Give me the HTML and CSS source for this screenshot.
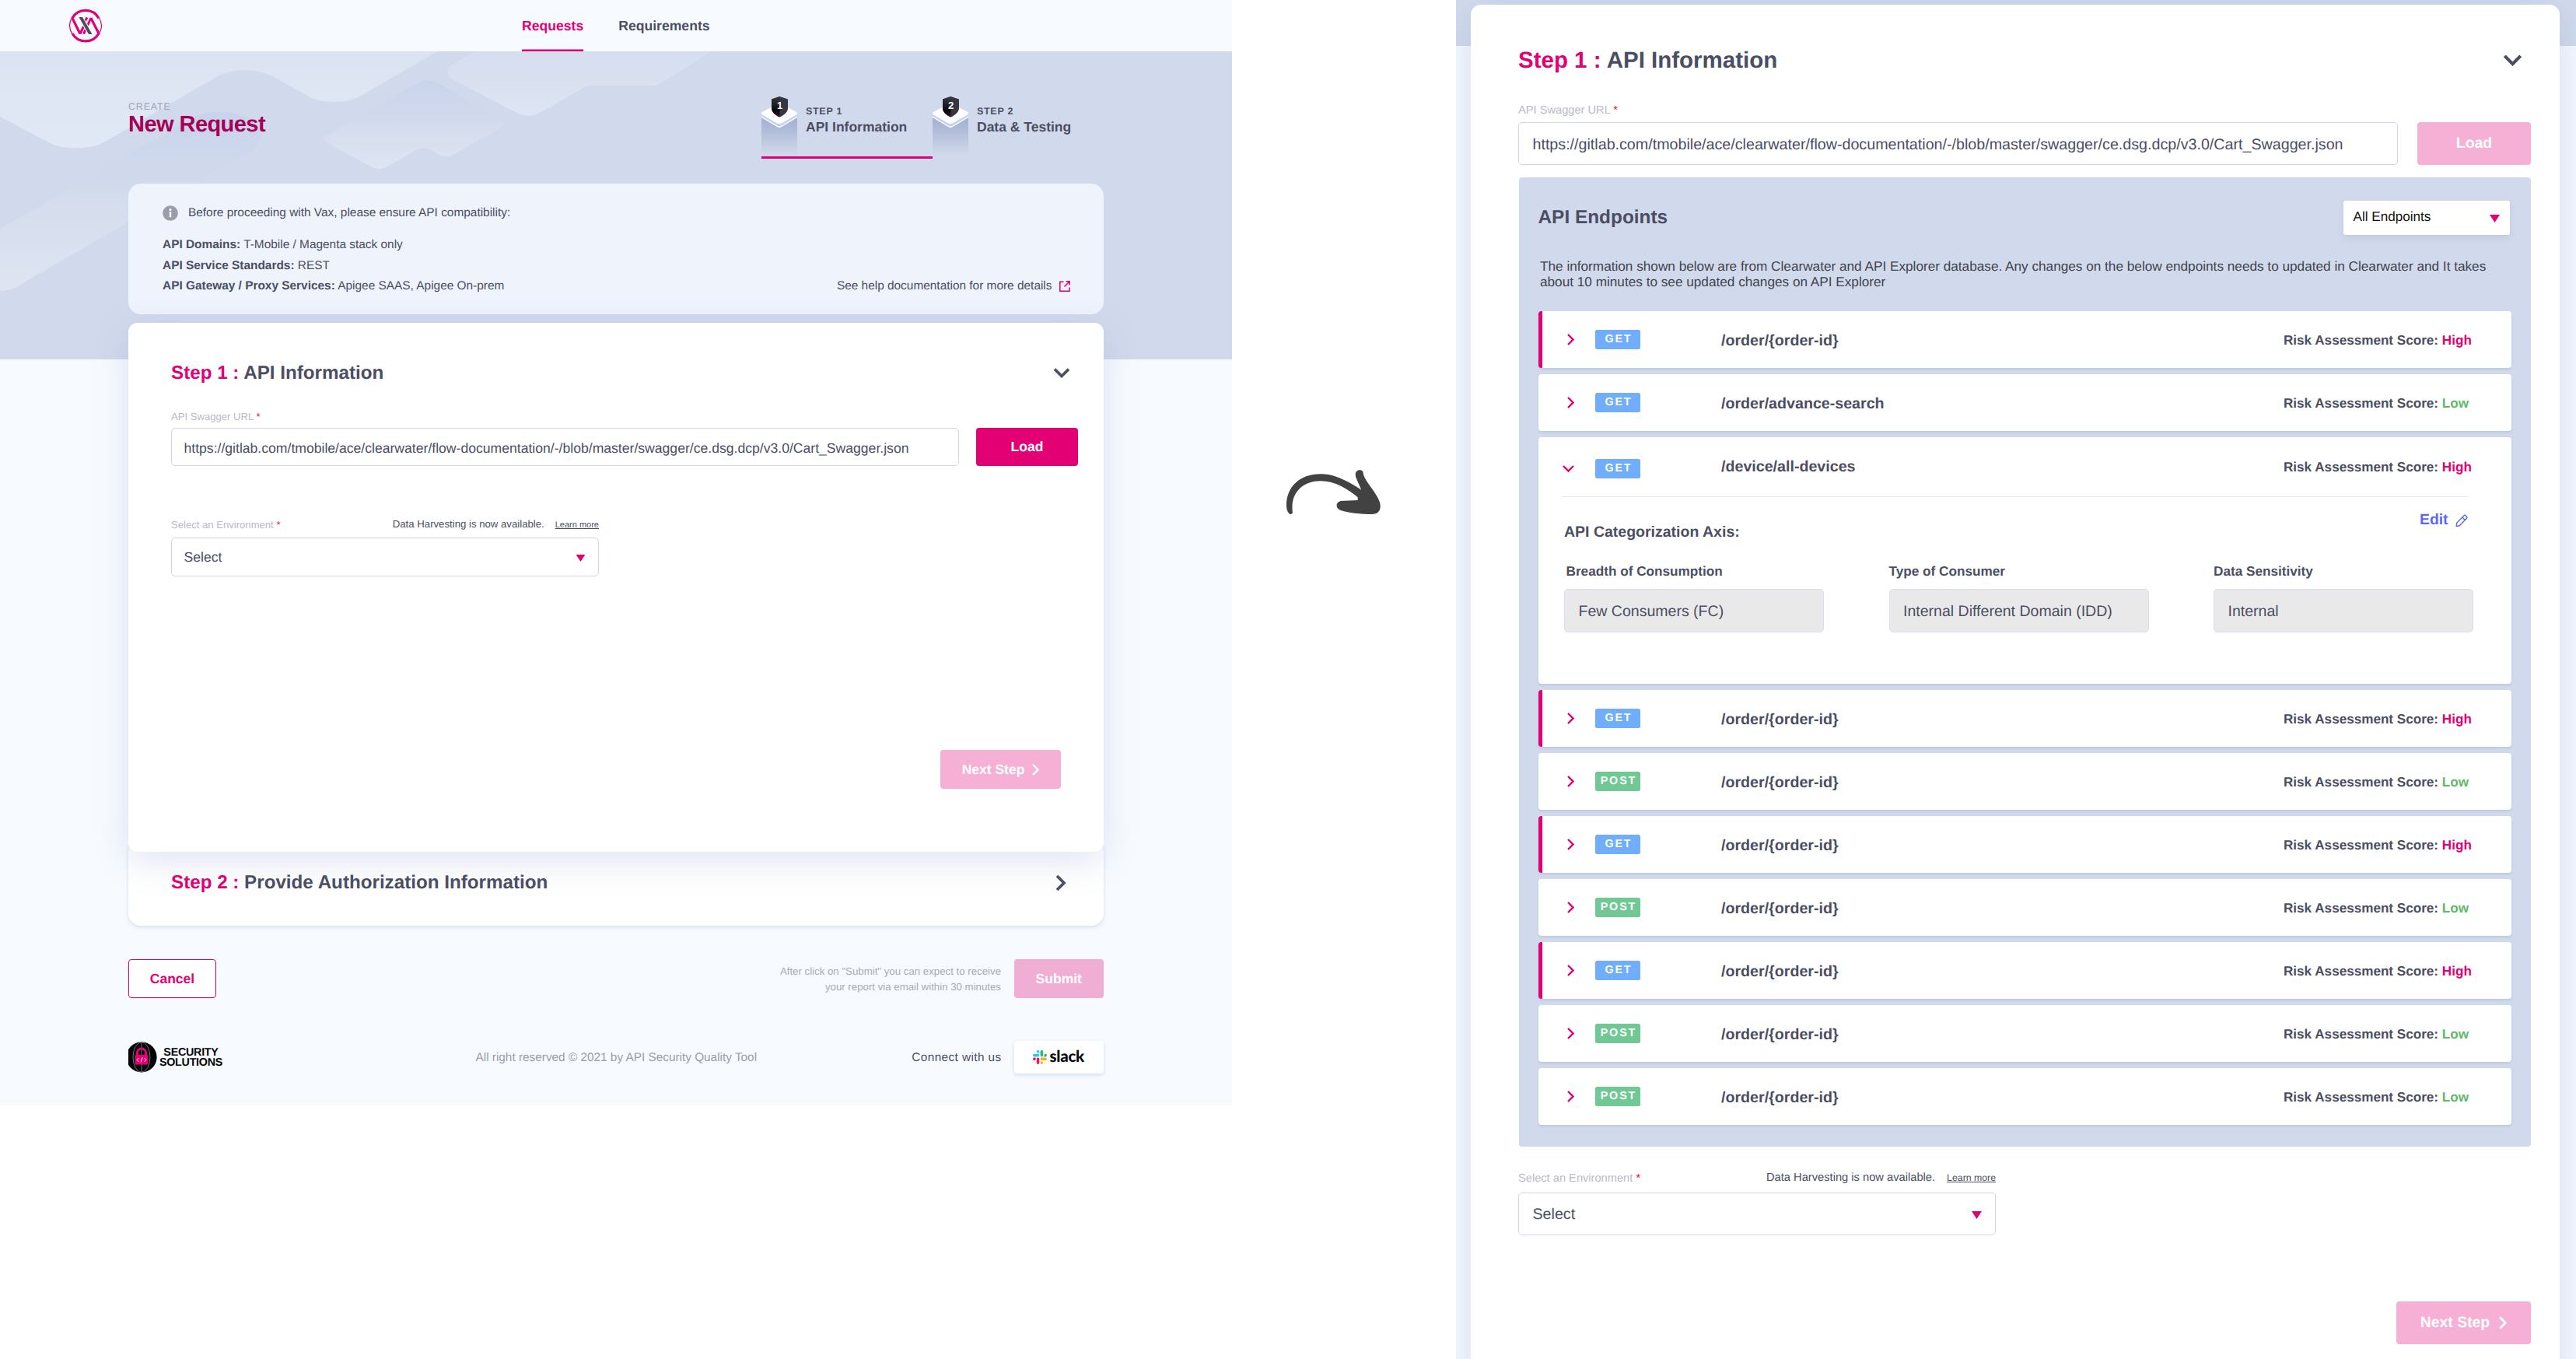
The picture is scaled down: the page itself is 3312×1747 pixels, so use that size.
FILE: index.html
```html
<!DOCTYPE html>
<html lang="en">
<head>
<meta charset="utf-8">
<title>New Request</title>
<link rel="stylesheet" href="styles.css">
</head>
<body>
<svg class="defs" width="0" height="0" aria-hidden="true">
  <symbol id="chev-down" viewBox="0 0 22 14"><path d="M2 2.5 11 11.5 20 2.5" fill="none" stroke="currentColor" stroke-width="3.7"/></symbol>
  <symbol id="chev-right" viewBox="0 0 9 15"><path d="M1 1 7.500 7.500 1 14" fill="none" stroke="currentColor" stroke-width="2.400"/></symbol>
  <symbol id="caret" viewBox="0 0 13 10"><path d="M0 0H13L6.5 10Z" fill="currentColor"/></symbol>
  <symbol id="tile" viewBox="0 0 46 78">
    <path d="M0 27H46V78H0Z" fill="url(#beam)"/>
    <path d="M0 26 0 29 20 41Q23 43 26 41L46 29V26Z" fill="#fff"/>
    <path d="M0 25.500V27.500L20 39.500Q23 41 26 39.500L46 27.500V25.500Z" fill="#c3d1f6"/>
    <path d="M1 22 20 12Q23 10.500 26 12L45 22Q47 24 45 25.500L26 36.500Q23 38 20 36.500L1 25.500Q-1 24 1 22Z" fill="#fff"/>
    <path d="M23.500 2 34 5.500V17C34 22 28.500 26.500 23.500 28.500 18 26.500 13 22 13 17V5.500Z" fill="#363640"/>
    <path d="M23.500 2V28.500C18 26.500 13 22 13 17V5.500Z" fill="url(#shade)"/>
  </symbol>
  <linearGradient id="beam" x1="0" y1="0" x2="0" y2="1"><stop offset="0" stop-color="#a4b1d0"/><stop offset=".3" stop-color="#adb9d6"/><stop offset="1" stop-color="#d1daec"/></linearGradient>
  <linearGradient id="shade" x1="0" y1="0" x2="0" y2="1"><stop offset="0" stop-color="#3a3a44"/><stop offset=".7" stop-color="#08080c"/><stop offset="1" stop-color="#3a1530"/></linearGradient>
</svg>

<div class="page page-left">
  <header class="header">
    <svg class="logo" width="44" height="44" viewBox="0 0 44 44">
      <path d="M3.500 13.500A20.300 20.300 0 0 0 5 33" fill="none" stroke="#e20074" stroke-width="1.200"/>
      <path d="M40.500 30.500A20.300 20.300 0 0 0 39 11" fill="none" stroke="#e20074" stroke-width="1.200"/>
      <path d="M15 32.500 5 12.200A19.500 19.500 0 0 1 39 12.500" fill="none" stroke="#e20074" stroke-width="3.200"/>
      <path d="M28.800 12 39 32A19.500 19.500 0 0 1 5 32" fill="none" stroke="#e20074" stroke-width="3.200"/>
      <path d="M15 32.500 19.500 23M19.500 32.500 23 25.500M24 23 29 12M20.500 17.500 24 11.500" fill="none" stroke="#e20074" stroke-width="3"/>
      <path d="M15.800 11 28.300 33" stroke="#f7fbff" stroke-width="6"/>
      <path d="M13.500 11H18L30.500 33H26Z" fill="#4b4e63"/>
    </svg>
    <nav class="nav"><a class="nav-link active">Requests</a><a class="nav-link">Requirements</a></nav>
  </header>
  <main class="content">
    <svg class="hero" viewBox="0 0 3104.600 1188" preserveAspectRatio="none">
      <defs>
        <linearGradient id="ga" x1="0" y1="0" x2="0" y2="1"><stop offset="0" stop-color="#dbe2f1"/><stop offset="1" stop-color="#e2e9f6"/></linearGradient>
        <linearGradient id="gb" x1="0" y1="0" x2="0" y2="1"><stop offset="0" stop-color="#c8d3ec"/><stop offset=".38" stop-color="#d1daec"/><stop offset="1" stop-color="#dfe5f2"/></linearGradient>
        <linearGradient id="gc" x1="0" y1="0" x2="0" y2="1"><stop offset="0" stop-color="#c8d4ed"/><stop offset=".4" stop-color="#d1d9ec"/><stop offset="1" stop-color="#dee5f3"/></linearGradient>
        <linearGradient id="gd" x1="0" y1="0" x2="0" y2="1"><stop offset="0" stop-color="#d5ddef"/><stop offset="1" stop-color="#dee5f3"/></linearGradient>
      </defs>
      <g transform="translate(0 -198)">
        <path fill="url(#ga)" d="M0 198H1103L920 360C880 404 800 404 765 360L690 297C650 262 585 262 545 297L262 548C230 578 155 578 122 548L0 450Z"/>
        <path fill="url(#gb)" d="M0 882 480 460C510 420 600 420 640 470 665 500 665 545 635 580L60 1090C40 1115 15 1122 0 1122Z"/>
        <path fill="url(#gc)" d="M1055 318C1068 306 1085 306 1100 318L1260 460C1272 472 1270 485 1260 496L1145 595C1135 606 1115 606 1105 595L1085 578C1072 569 1060 569 1050 578L975 643C962 654 948 654 935 643L825 552C814 542 814 530 825 520Z"/>
        <path fill="url(#gd)" d="M1197 198 1140 250C1122 265 1122 290 1140 305L1305 437C1320 450 1345 448 1358 437L1470 338C1478 331 1485 330 1495 330H1655L1792 198Z"/>
      </g>
    </svg>

    <div class="title-row">
      <div class="title-block">
        <div class="eyebrow">CREATE</div>
        <h1 class="title">New Request</h1>
      </div>
      <div class="steps">
        <div class="step current">
          <div class="tile"><svg width="46" height="78"><use href="#tile"/></svg><span class="tile-no">1</span></div>
          <div class="step-text"><div class="step-label">STEP 1</div><div class="step-name">API Information</div></div>
        </div>
        <div class="step">
          <div class="tile"><svg width="46" height="78"><use href="#tile"/></svg><span class="tile-no">2</span></div>
          <div class="step-text"><div class="step-label">STEP 2</div><div class="step-name">Data &amp; Testing</div></div>
        </div>
      </div>
    </div>

    <section class="info">
      <div class="info-head">
        <svg width="20" height="20" viewBox="0 0 20 20"><circle cx="10" cy="10" r="9.800" fill="#9b9dac"/><circle cx="10" cy="5.400" r="1.500" fill="#fff"/><path d="M8.800 8.200H11.200V15.200H8.800Z" fill="#fff"/></svg>
        <span>Before proceeding with Vax, please ensure API compatibility:</span>
      </div>
      <div class="info-line"><span><b>API Domains:</b> T-Mobile / Magenta stack only</span></div>
      <div class="info-line"><span><b>API Service Standards:</b> REST</span></div>
      <div class="info-line"><span><b>API Gateway / Proxy Services:</b> Apigee SAAS, Apigee On-prem</span>
        <span class="help">See help documentation for more details
          <svg width="14" height="14" viewBox="0 0 14 14" fill="none" stroke="#e20074" stroke-width="1.500"><path d="M5.500 1.300H.8V13.200H13.100V8.500M8.500 .8H13.200V5.500M13 1 6.500 7.500"/></svg>
        </span>
      </div>
    </section>

    <section class="card step-one">
      <div class="card-head"><h2 class="card-title"><span class="pink">Step 1 :</span> API Information</h2><svg width="22" height="14"><use href="#chev-down"/></svg></div>
      <div class="label url-label">API Swagger URL <i>*</i></div>
      <div class="url-row"><div class="field">https://gitlab.com/tmobile/ace/clearwater/flow-documentation/-/blob/master/swagger/ce.dsg.dcp/v3.0/Cart_Swagger.json</div><div class="btn load">Load</div></div>
      <div class="env">
        <div class="env-head"><span class="label">Select an Environment <i>*</i></span><span class="harvest">Data Harvesting is now available.<a class="learn">Learn more</a></span></div>
        <div class="field select"><span>Select</span><svg width="13" height="9"><use href="#caret"/></svg></div>
      </div>
      <div class="btn next soft">Next Step<svg width="9" height="15"><use href="#chev-right"/></svg></div>
    </section>
    <section class="card step-two">
      <h2 class="card-title"><span class="pink">Step 2 :</span> Provide Authorization Information</h2><svg width="14" height="22" viewBox="0 0 14 22"><path d="M2 2 11 11 2 20" fill="none" stroke="#4b4e63" stroke-width="3.700"/></svg>
    </section>

    <div class="actions">
      <div class="btn cancel">Cancel</div>
      <p class="hint">After click on "Submit" you can expect to receive<br>your report via email within 30 minutes</p>
      <div class="btn submit">Submit</div>
    </div>
    <footer class="footer">
      <div class="security">
        <svg width="38" height="40" viewBox="0 0 38 40">
          <circle cx="18" cy="20" r="19.600" fill="#050507"/>
          <g fill="none" stroke="#8b8b90" stroke-width=".8"><ellipse cx="18" cy="20" rx="11" ry="19.300"/><path d="M18 .5V39.500"/></g>
          <path d="M12.500 19V14.500A5.500 5.500 0 0 1 23.500 14.500V19" fill="none" stroke="#e20074" stroke-width="3"/>
          <rect x="9.500" y="17" width="17" height="12.500" rx="1.500" fill="#e20074"/>
          <path d="M14.500 21 12 23.500 14.500 26M21.500 21 24 23.500 21.500 26M19 20.500 17 26.500" fill="none" stroke="#fff" stroke-width="1"/>
        </svg>
        <div class="security-name"><span>SECURITY</span><span>SOLUTIONS</span></div>
      </div>
      <div class="copyright">All right reserved © 2021 by API Security Quality Tool</div>
      <div class="connect">Connect with us</div>
      <div class="slack">
        <svg width="18" height="18" viewBox="0 0 54 54">
          <path fill="#36c5f0" d="M19.700.1a5.400 5.400 0 0 0 0 10.800h5.400V5.500A5.400 5.400 0 0 0 19.700.1m0 14.400H5.400a5.400 5.400 0 0 0 0 10.800h14.300a5.400 5.400 0 0 0 0-10.800"/>
          <path fill="#2eb67d" d="M53.800 19.900a5.400 5.400 0 0 0-10.800 0v5.400h5.400a5.400 5.400 0 0 0 5.400-5.400m-14.300 0V5.500a5.400 5.400 0 0 0-10.800 0v14.400a5.400 5.400 0 0 0 10.800 0"/>
          <path fill="#ecb22e" d="M34.100 54a5.400 5.400 0 0 0 0-10.800h-5.400v5.400a5.400 5.400 0 0 0 5.400 5.400m0-14.400h14.300a5.400 5.400 0 0 0 0-10.800H34.100a5.400 5.400 0 0 0 0 10.800"/>
          <path fill="#e01e5a" d="M0 34.200a5.400 5.400 0 0 0 10.800 0v-5.400H5.400A5.400 5.400 0 0 0 0 34.200m14.300 0v14.400a5.400 5.400 0 0 0 10.800 0V34.200a5.400 5.400 0 0 0-10.800 0"/>
        </svg>
        <span>slack</span>
      </div>
    </footer>
  </main>
</div>

<div class="flow-arrow">
  <svg width="122" height="58" viewBox="103 131 366 174"><path fill="#424242" d="M103 268C103 200 150 147 238 147 290 147 350 180 391 208 388 198 380 182 373 165 365 148 370 132 386 132 400 132 398 142 401 152 410 180 450 218 463 256 470 282 460 302 433 302 390 301 340 297 310 286 292 278 292 256 312 251L378 248V237C340 205 290 174 235 174 170 174 120 215 126 288L127 297C122 303 120 303 115 301 108 294 103 285 103 268Z"/></svg>
</div>

<div class="page page-right">
  <section class="card big">
    <div class="card-head"><h2 class="card-title"><span class="pink">Step 1 :</span> API Information</h2><svg width="25" height="16"><use href="#chev-down"/></svg></div>
    <div class="label url-label">API Swagger URL <i>*</i></div>
    <div class="url-row"><div class="field">https://gitlab.com/tmobile/ace/clearwater/flow-documentation/-/blob/master/swagger/ce.dsg.dcp/v3.0/Cart_Swagger.json</div><div class="btn load soft">Load</div></div>

    <div class="endpoints">
      <div class="ep-head"><h3 class="ep-title">API Endpoints</h3><div class="filter"><span>All Endpoints</span><svg width="13" height="10"><use href="#caret"/></svg></div></div>
      <p class="ep-note">The information shown below are from Clearwater and API Explorer database. Any changes on the below endpoints needs to updated in Clearwater and It takes<br>about 10 minutes to see updated changes on API Explorer</p>
      <div class="rows">
        <div class="row flagged"><div class="row-main"><svg class="chev"><use href="#chev-right"/></svg><span class="badge get">GET</span><span class="path">/order/{order-id}</span><span class="risk">Risk Assessment Score: <em class="high">High</em></span></div></div>
        <div class="row"><div class="row-main"><svg class="chev"><use href="#chev-right"/></svg><span class="badge get">GET</span><span class="path">/order/advance-search</span><span class="risk">Risk Assessment Score: <em class="low">Low</em></span></div></div>
        <div class="row open">
          <div class="row-main"><svg class="chev-open" viewBox="0 0 15 9"><path d="M1 1 7.500 7.500 14 1" fill="none" stroke="#e20074" stroke-width="2.400"/></svg><span class="badge get">GET</span><span class="path">/device/all-devices</span><span class="risk">Risk Assessment Score: <em class="high">High</em></span></div>
          <div class="detail">
            <div class="detail-head"><h4 class="axis">API Categorization Axis:</h4><a class="edit">Edit<svg width="16" height="17" viewBox="0 0 16 17" fill="none" stroke="#5b66f5" stroke-width="1.400" stroke-linejoin="round"><path d="M1.200 15.500 1.700 11.200 11 1.800Q12 .9 13 1.800L14.500 3.300Q15.400 4.300 14.500 5.300L5.200 14.800ZM8.800 4 12.300 7.500"/></svg></a></div>
            <div class="axes">
              <div><div class="axis-label first">Breadth of Consumption</div><div class="axis-value">Few Consumers (FC)</div></div>
              <div><div class="axis-label">Type of Consumer</div><div class="axis-value">Internal Different Domain (IDD)</div></div>
              <div><div class="axis-label">Data Sensitivity</div><div class="axis-value">Internal</div></div>
            </div>
          </div>
        </div>
        <div class="row flagged"><div class="row-main"><svg class="chev"><use href="#chev-right"/></svg><span class="badge get">GET</span><span class="path">/order/{order-id}</span><span class="risk">Risk Assessment Score: <em class="high">High</em></span></div></div>
        <div class="row"><div class="row-main"><svg class="chev"><use href="#chev-right"/></svg><span class="badge post">POST</span><span class="path">/order/{order-id}</span><span class="risk">Risk Assessment Score: <em class="low">Low</em></span></div></div>
        <div class="row flagged"><div class="row-main"><svg class="chev"><use href="#chev-right"/></svg><span class="badge get">GET</span><span class="path">/order/{order-id}</span><span class="risk">Risk Assessment Score: <em class="high">High</em></span></div></div>
        <div class="row"><div class="row-main"><svg class="chev"><use href="#chev-right"/></svg><span class="badge post">POST</span><span class="path">/order/{order-id}</span><span class="risk">Risk Assessment Score: <em class="low">Low</em></span></div></div>
        <div class="row flagged"><div class="row-main"><svg class="chev"><use href="#chev-right"/></svg><span class="badge get">GET</span><span class="path">/order/{order-id}</span><span class="risk">Risk Assessment Score: <em class="high">High</em></span></div></div>
        <div class="row"><div class="row-main"><svg class="chev"><use href="#chev-right"/></svg><span class="badge post">POST</span><span class="path">/order/{order-id}</span><span class="risk">Risk Assessment Score: <em class="low">Low</em></span></div></div>
        <div class="row"><div class="row-main"><svg class="chev"><use href="#chev-right"/></svg><span class="badge post">POST</span><span class="path">/order/{order-id}</span><span class="risk">Risk Assessment Score: <em class="low">Low</em></span></div></div>
      </div>
    </div>

    <div class="env">
      <div class="env-head"><span class="label">Select an Environment <i>*</i></span><span class="harvest">Data Harvesting is now available.<a class="learn">Learn more</a></span></div>
      <div class="field select"><span>Select</span><svg width="15" height="10"><use href="#caret"/></svg></div>
    </div>
    <div class="btn next soft">Next Step<svg width="10" height="17"><use href="#chev-right"/></svg></div>
  </section>
</div>
</body>
</html>
```
FILE: styles.css
```css
*{box-sizing:border-box}
html,body{margin:0;height:1747px;overflow:hidden}
body{display:flex;align-items:flex-start;background:#fff;color:#4b4e63;font-family:"Liberation Sans",Arial,sans-serif;text-rendering:geometricPrecision}
h1,h2,h3,h4,p{margin:0}
svg{display:block;flex:none}
.defs{position:absolute}
.pink{color:#e20074}

/* left page */
.page-left{width:1584px;height:1421px;background:#f7fbff;flex:none;overflow:hidden}
.header{height:66px;display:flex}
.logo{margin:11px 0 0 88px}
.nav{display:flex;gap:45px;margin-left:539px;font-size:17.6px;font-weight:700;line-height:67.5px}
.nav-link{height:66px}
.nav-link.active{color:#e20074;box-shadow:inset 0 -2.5px #e20074}
.content{position:relative;height:1355px;padding:0 165px}
.hero{position:absolute;left:0;top:0;width:1584px;height:396px;background:#d1daec}
.title-row{position:relative;height:170px;display:flex;justify-content:space-between}
.title-block{padding-top:62.5px}
.eyebrow{font-size:12.4px;line-height:16px;letter-spacing:.9px;color:#9fa3b5}
.title{font-size:29px;line-height:31px;letter-spacing:-.55px;color:#a50055}
.steps{display:flex;padding-top:56px}
.step{width:220px;height:82px;display:flex;border-bottom:3px solid transparent}
.step.current{border-color:#e20074}
.tile{position:relative}
.tile-no{position:absolute;left:13px;width:21px;top:6px;text-align:center;color:#fff;font-size:13px;font-weight:700;line-height:16px}
.step-text{padding:13px 0 0 11px;font-weight:700}
.step-label{font-size:12.500px;line-height:16px;letter-spacing:.7px}
.step-name{font-size:17.500px;line-height:24px}

.info{position:relative;height:168px;border-radius:16px;background:#eef3fc;padding:24.8px 43.5px 0 44px;font-size:15.42px;line-height:26.5px}
.info-head{display:flex;align-items:center;gap:13px;margin-bottom:15px}
.info-line{display:flex;justify-content:space-between}
.help{display:flex;align-items:center;gap:9px}
.help svg{margin-top:-2px}

.card{position:relative;background:#fff}
.card-head{display:flex;justify-content:space-between;align-items:center}
.card-title{font-size:24.2px;line-height:30px}
.step-one{z-index:1;height:680px;margin-top:11px;border-radius:12px;padding:49.6px 33px 0 55px;box-shadow:0 12px 46px rgba(100,120,190,.2)}
.step-one .card-head{padding-right:10px}
.step-one .card-head svg,.big .card-head svg{margin-top:-2px}
.label{display:block;font-size:13.1px;line-height:16px;color:#b9bac6}
.label i{font-style:normal;color:#f0122d}
.url-label{margin:33px 0 6.400px}
.url-row{display:flex;gap:22px}
.field{flex:1;height:49.5px;border:1px solid #cdd6ea;border-radius:5px;background:#fff;padding:2px 0 0 15.500px;font-size:17.600px;line-height:47.500px;white-space:nowrap}
.btn{border-radius:4px;height:49.5px;font-size:17.5px;font-weight:700;line-height:49px;text-align:center;color:#fff}
.soft{background:#f6b0d5}
.load{width:131px;background:#e20074}
.load.soft{background:#f6b0d5}
.env{width:550px;margin-top:68px}
.env-head{display:flex;justify-content:space-between;margin-bottom:8px}
.harvest{font-size:13.2px;line-height:16px;margin-top:-1px;display:flex}
.learn{font-size:11px;text-decoration:underline;margin-left:14px;padding-top:.5px}
.select{display:flex;justify-content:space-between;align-items:center;padding-right:16px}
.select svg,.filter svg{color:#e20074}
.next{display:flex;align-items:center;justify-content:center;gap:10px;width:155px;margin:223.500px 22px 0 auto}
.next svg{margin-top:1px}
.step-two{height:110px;margin-top:-15px;border-radius:16px;padding:0 48.500px 0 55px;display:flex;justify-content:space-between;align-items:center;box-shadow:0 2px 5px rgba(100,120,190,.22)}
.step-two .card-title{margin-top:0}
.actions{display:flex;margin-top:43px}
.cancel{width:113px;border:1px solid #e20074;color:#e20074;background:#fff;line-height:48.5px}
.hint{margin-left:auto;padding-top:5.6px;text-align:right;font-size:13.25px;line-height:20px;color:#a7a9b5}
.submit{width:115.5px;margin-left:16.500px;background:#f1aed4;line-height:51px}
.footer{display:flex;align-items:center;height:42px;margin-top:55.500px;font-size:15.35px}
.security{display:flex;align-items:center;width:120.500px;overflow:hidden;color:#050507}
.security svg{margin-left:-1px}
.security-name{display:flex;flex-direction:column;align-items:center;flex:none;width:85px;margin:2px 0 0 1px;font-size:14.3px;font-weight:700;line-height:13px;letter-spacing:-.25px}
.copyright{margin:1px 0 0 326px;color:#9a9cab}
.connect{margin:1px 0 0 auto;letter-spacing:.4px}
.slack{width:115.5px;height:42px;margin-left:16px;border-radius:4px;background:#fff;display:flex;align-items:center;justify-content:center;gap:4px;padding-right:1px;box-shadow:0 2px 5px rgba(100,120,220,.24);font-family:Lato,sans-serif;font-weight:900;font-size:20.5px;letter-spacing:-.3px;color:#0a0a0a}
.slack span{margin-top:-3px}

.flow-arrow{width:288px;flex:none;padding:604px 0 0 70px}

/* right page */
.page-right{width:1440px;height:1747px;flex:none;overflow:hidden;padding:6px 21px 0 18.500px;background:linear-gradient(#d1daec 59px,#f7fbff 59px)}
.big{height:1800px;border-radius:13px;padding:54px 37px 0 61.500px;box-shadow:0 12px 52px rgba(100,120,190,.24)}
.big .card-head{padding-right:11.500px}
.big .card-title{font-size:29.5px;line-height:36px}
.big .label{font-size:14.65px;line-height:18px}
.big .url-label{margin:37.200px 0 5.800px}
.big .url-row{gap:25px}
.big .field{height:55px;line-height:53px;font-size:19.680px;padding-left:17.500px}
.big .btn{height:55px;line-height:55px;font-size:19.4px}
.big .load{width:146px}
.endpoints{height:1246px;margin:16px 0 0 1px;border-radius:4px;background:#d1daec;padding:30px 25px 0 24.500px}
.ep-head{display:flex;justify-content:space-between;height:44px}
.ep-title{font-size:24.4px;line-height:43px}
.filter{width:214px;margin-right:2px;padding:0 13px 0 12.500px;display:flex;align-items:center;justify-content:space-between;border-radius:3px;background:#fff;color:#111;font-size:17.100px;line-height:42px;box-shadow:0 4px 8px rgba(120,140,190,.2)}
.filter span{margin-top:-1px}
.filter svg{margin-top:2px}
.ep-note{margin:31px 0 27.600px 2.500px;font-size:17.210px;line-height:19.7px;color:#41434c;white-space:nowrap}
.rows{display:flex;flex-direction:column;gap:7.500px}
.row{height:73.500px;border-radius:4px;background:#fff;overflow:hidden;box-shadow:0 2px 3px rgba(100,120,180,.18)}
.row.flagged{border-left:5px solid #e20074}
.row-main{height:74px;display:grid;grid-template-columns:73.500px 162px 1fr 293px;align-items:center;font-weight:700}
.flagged .row-main{margin-left:-5px}
.chev{width:9px;height:15px;margin-left:37.500px;color:#e20074}
.chev-open{width:15px;height:9px;margin-left:31.500px}
.badge{width:58px;height:25px;border-radius:2.500px;color:#fff;font-size:14.3px;line-height:25.500px;letter-spacing:1.9px;text-indent:1.9px;text-align:center}
.get{background:#70adfa}
.post{background:#70c995}
.path{font-size:19.65px;padding-top:3.500px}
.risk{font-size:17.12px;padding-top:3px}
.risk em{font-style:normal}
.high{color:#e20074}
.low{color:#60b968}
.open{height:317.500px;flex:none}
.open .row-main{height:76px;padding-top:5px}
.open .path,.open .risk{padding-top:0;margin-top:-3px}
.detail{margin:0 56px 0 30.500px;padding:18.500px 0 0 3px;border-top:1.400px solid #e6e7ea}
.detail-head{display:flex;justify-content:space-between;height:39px}
.axis{font-size:19.500px;line-height:24px;margin-top:15px}
.edit{display:flex;gap:9.500px;align-items:center;height:24px;font-size:19.3px;font-weight:700;color:#5b66f5}
.axes{display:grid;grid-template-columns:repeat(3,334px);gap:83.500px;margin-top:27.200px}
.axis-label{font-size:17.180px;font-weight:700;line-height:20px;margin-bottom:13px;white-space:nowrap}
.axis-label.first{padding-left:2.500px}
.axis-value{height:56px;border:1.400px solid #d9ddf0;border-radius:5px;background:#e9e9e9;padding-left:17.500px;font-size:19.550px;line-height:56.500px;white-space:nowrap}
.big .env{width:614px;margin-top:32px}
.big .env-head{margin-bottom:9.500px}
.big .harvest{font-size:14.7px;line-height:18px}
.big .learn{font-size:12.300px;margin-left:15px}
.big .next{width:173px;margin:84.500px 0 0 auto;gap:12px}
```
